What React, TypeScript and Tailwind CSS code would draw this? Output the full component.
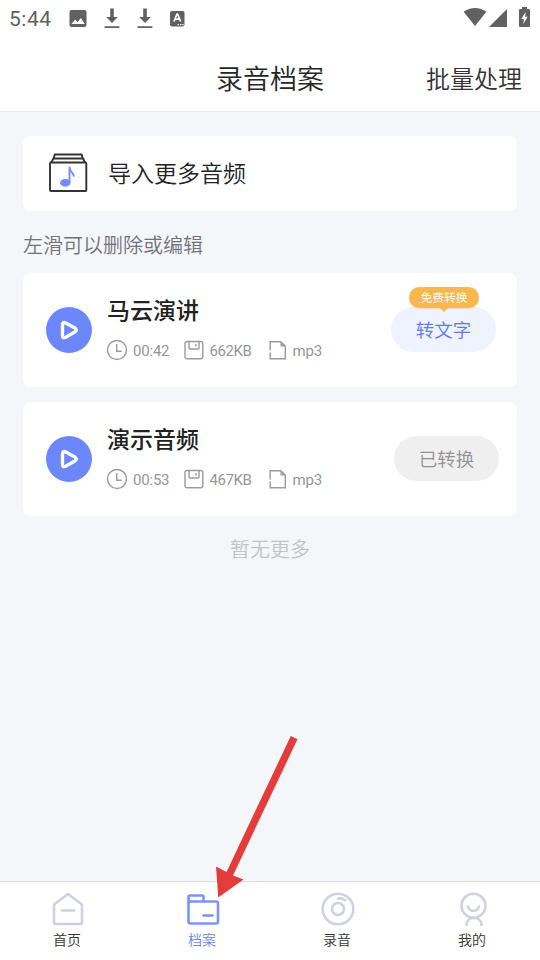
import type { ReactNode } from "react";

type Recording = { title: string; time: string; size: string; converted: boolean };

const recordings: Recording[] = [
  { title: "马云演讲", time: "00:42", size: "662KB", converted: false },
  { title: "演示音频", time: "00:53", size: "467KB", converted: true },
];

function DownloadIcon() {
  return (
    <svg className="h-[22px] w-4" viewBox="0 0 16 22" fill="#616161">
      <path d="M6.200 0.500h3.600v8.500h4L8 15 2.200 9h4zM.6 18.200h14.800v1.800H.6z" />
    </svg>
  );
}

function StatusBar() {
  return (
    <div className="flex h-[38px] shrink-0 items-center pl-[9px] text-[#616161]">
      <span className="w-[60px] font-[Roboto] text-[21px] font-normal leading-6 tracking-[0.5px]">5:44</span>
      <svg className="h-[18px] w-[18px]" viewBox="0 0 18 18">
        <rect x="0.500" y="0" width="17" height="17" rx="2" fill="#616161" />
        <path d="M2.500 14l3.600-4.600 2.400 2.800 3.300-4.200 4 6z" fill="#fff" />
      </svg>
      <div className="ml-[17px] flex gap-[17px]">
        <DownloadIcon />
        <DownloadIcon />
      </div>
      <svg className="ml-[17px] h-4 w-[15px]" viewBox="0 0 15 16">
        <rect x="0" y="0" width="14.500" height="15.500" rx="2" fill="#616161" />
        <path d="M4 10.500l3-7.500h.6l3 7.500M5.200 8.200h4.200" fill="none" stroke="#fff" strokeWidth="1.700" />
        <path d="M7.500 13h1.300v1.300H7.500zM10 13h1.300v1.300H10zM12.300 13h1.300v1.300h-1.300z" fill="#fff" />
      </svg>
      <svg className="-mt-1 ml-auto h-5 w-6" viewBox="0 0 24 20">
        <path d="M.6 4.800C7-.4 17-.4 23.400 4.800L12 19z" fill="#616161" />
      </svg>
      <svg className="-mt-0.5 ml-[2px] h-[18px] w-[18px]" viewBox="0 0 18 18">
        <path d="M18 0v18H0z" fill="#616161" />
      </svg>
      <svg className="-mt-1 ml-3 mr-[10px] h-5 w-[11px]" viewBox="0 0 11 20">
        <path d="M3 0h5v2h2q1 0 1 1v16q0 1-1 1H1q-1 0-1-1V3q0-1 1-1h2z" fill="#616161" />
        <path d="M6.700 5L2.300 12h2.600l-.6 5L8.700 9.800H6.100z" fill="#fff" />
      </svg>
    </div>
  );
}

function ClockIcon() {
  return (
    <svg className="-ml-px h-[22px] w-[22px]" viewBox="0 0 22 22" fill="none" stroke="#9b9b9b" strokeWidth="1.400">
      <circle cx="11" cy="11" r="9.500" />
      <path d="M10.700 5v7.200h5" />
    </svg>
  );
}

function DiskIcon() {
  return (
    <svg className="h-5 w-5" viewBox="0 0 20 20" fill="none" stroke="#9b9b9b" strokeWidth="1.400">
      <rect x="1" y="1.500" width="17.800" height="17.300" rx="2" />
      <path d="M5 1.500v6.500q0 1 1 1h8q1 0 1-1V1.500M11.900 4v2.500" />
    </svg>
  );
}

function FileIcon() {
  return (
    <svg className="ml-px h-5 w-[18px]" viewBox="0 0 18 20" fill="none" stroke="#9b9b9b" strokeWidth="1.400">
      <path d="M1.200 10.500V1.700h10.500L16.300 6v12.800H1.200V12.500" />
      <path d="M11.500 1.700V6.500h4.800z" fill="#9b9b9b" stroke="none" />
    </svg>
  );
}

function RecordingCard({ item }: { item: Recording }) {
  return (
    <div className="flex h-[114px] rounded-lg bg-white">
      <div className="ml-[23px] mt-[34px] h-[46px] w-[46px] shrink-0 rounded-full bg-[#6c86fb]">
        <svg viewBox="0 0 46 46" fill="none" stroke="#fff" strokeWidth="3.400" strokeLinejoin="round">
          <path d="M16.500 18q0-3.500 3.200-2l8.700 4.700q3.800 2.300 0 4.600l-8.700 4.900q-3.200 1.500-3.200-2z" />
        </svg>
      </div>
      <div className="ml-[15px] flex-1 pt-[21px]">
        <div className="text-[23px] font-medium leading-[30px] text-[#222]">{item.title}</div>
        <div className="mt-[15px] flex h-[22px] items-center whitespace-nowrap font-[Roboto] text-[15px] font-normal leading-[22px] text-[#969696]">
          <ClockIcon />
          <span className="ml-[5px] w-[50.500px] pt-0.5 tracking-[-0.200px]">{item.time}</span>
          <DiskIcon />
          <span className="ml-[6px] w-[58px] pt-0.5 tracking-[-0.400px]">{item.size}</span>
          <FileIcon />
          <span className="ml-[6px] pt-0.5 tracking-[-0.200px]">mp3</span>
        </div>
      </div>
      {item.converted ? (
        <div className="mr-[18px] mt-[34px] h-[45px] w-[105px] rounded-full bg-[#efefef] text-center text-[18.500px] leading-[45px] text-[#929292]">
          已转换
        </div>
      ) : (
        <div className="relative mr-[21px] mt-[34px] h-[45px] w-[105px] rounded-full bg-[#eff2ff] text-center text-[18.500px] leading-[45px] text-[#5e7af0]">
          转文字
          <div className="absolute -top-5 left-[18px] h-[21px] w-[70px] rounded-full bg-[#f8b84e] text-[11.800px] font-[350] leading-[20px] text-white shadow-[0_1px_2px_#f8b84e66]">
            免费转换
            <svg className="absolute left-[30px] top-5 h-[5px] w-[10px]" viewBox="0 0 10 5">
              <path d="M0 0h10L5 5z" fill="#f8b84e" />
            </svg>
          </div>
        </div>
      )}
    </div>
  );
}

function Tab({ label, active, children }: { label: string; active?: boolean; children: ReactNode }) {
  return (
    <div className={`flex flex-1 flex-col items-center pr-px pt-[9px] ${active ? "text-[#6c83ef]" : "text-[#333]"}`}>
      <svg
        className={`ml-px h-9 w-9 ${active ? "text-[#7b93fc]" : "text-[#d0d0e5]"}`}
        viewBox="0 0 36 36"
        fill="none"
        stroke="currentColor"
        strokeWidth="2.600"
        strokeLinecap="round"
        strokeLinejoin="round"
      >
        {children}
      </svg>
      <span className="mt-0.5 text-sm font-[350] leading-5">{label}</span>
    </div>
  );
}

export default function App() {
  return (
    <div className="relative flex h-[960px] w-[540px] flex-col overflow-hidden bg-[#f4f6fa] font-['Noto_Sans_CJK_SC',sans-serif] font-[350]">
      <div className="shrink-0 border-b border-[#e9e9ee] bg-white">
        <StatusBar />
        <header className="grid h-[73px] grid-cols-[1fr_auto_1fr] items-center pt-[6px]">
          <span className="col-start-2 text-[27px] leading-10 text-[#262626]">录音档案</span>
          <span className="mr-[18px] justify-self-end text-2xl leading-10 text-[#333]">批量处理</span>
        </header>
      </div>
      <main className="flex-1 px-[23px] pt-6">
        <div className="flex h-[75px] items-center rounded-lg bg-white pb-[3px] pl-[25px]">
          <svg className="h-10 w-10" viewBox="0 0 40 40" fill="none" stroke="#333" strokeWidth="1.900" strokeLinejoin="round">
            <rect x="2" y="10.500" width="36.300" height="28.500" rx="1" />
            <path d="M3.500 10.500l1.800-4h29.800L37 10.500M5.700 6.500l1-4h27l1 4" />
            <ellipse cx="17.300" cy="30.800" rx="5.200" ry="3.900" fill="#728bff" stroke="none" />
            <path d="M21.500 31V15.500c.5 4.500 3.800 4.500 4.500 9" stroke="#728bff" />
          </svg>
          <span className="ml-5 text-[23px] leading-8 text-[#222]">导入更多音频</span>
        </div>
        <div className="mb-[14px] mt-[19px] text-xl leading-[29px] text-[#707277]">左滑可以删除或编辑</div>
        <div className="flex flex-col gap-[15px]">
          {recordings.map((item) => (
            <RecordingCard key={item.title} item={item} />
          ))}
        </div>
        <div className="mt-[18px] text-center text-xl leading-[30px] text-[#c2c3c7]">暂无更多</div>
      </main>
      <nav className="flex h-[79px] shrink-0 border-t border-[#d9dadd] bg-white">
        <Tab label="首页">
          <path d="M4 13.500L18 3l14 10.500V31q0 2-2 2H6q-2 0-2-2zM12 19.500h12" />
        </Tab>
        <Tab label="档案" active>
          <path d="M3.500 30.500V6q0-1.500 1.500-1.500h12Q18.500 4.500 18.500 6v4.500h12.500q2 0 2 2v18q0 2-2 2H5.500q-2 0-2-2v-18q0-2 2-2h13M18.500 24.500h9" />
        </Tab>
        <Tab label="录音">
          <circle cx="18" cy="18" r="15.300" />
          <circle cx="18" cy="18" r="6" />
          <path d="M18 7.500q4-.5 7 1.500" />
        </Tab>
        <Tab label="我的">
          <circle cx="18.500" cy="14.700" r="12" />
          <path d="M13 15.500c1.500 5.800 9.500 5.800 11 0M11.500 34c0-9.500 15-9.500 15 0" />
        </Tab>
      </nav>
      <svg className="absolute left-[210px] top-[730px] h-[170px] w-[95px]" viewBox="0 0 95 170" fill="#e33c3b">
        <path d="M80.800 6L87.500 9.200 23 145.500l10.500 4L8.300 167.500 6 136.500l10.500 5.500z" />
      </svg>
    </div>
  );
}
